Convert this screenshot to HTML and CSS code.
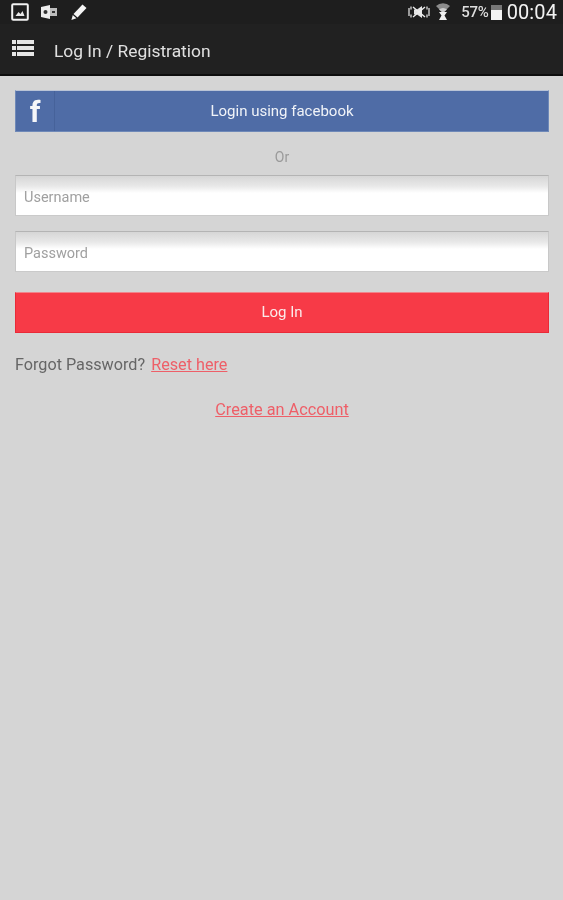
FILE: index.html
```html
<!DOCTYPE html>
<html lang="en">
<head>
<meta charset="utf-8">
<title>Log In / Registration</title>
<link rel="stylesheet" href="styles.css">
</head>
<body>
<header class="chrome">
  <div class="status">
    <div class="status-left">
      <svg class="ic" width="18" height="18" viewBox="0 0 18 18"><rect x="1.2" y="1.2" width="15.6" height="15.6" rx="1" fill="none" stroke="#f2f2f2" stroke-width="2"/><path d="M4.500 13l3-4 2 2 2-3 2 5z" fill="#e8e8e8"/></svg>
      <svg class="ic" width="17" height="14" viewBox="0 0 17 14"><rect x="6" y="3" width="10" height="8" fill="#bdbdbd"/><path d="M0 2l9-2v14l-9-2z" fill="#ececec"/><circle cx="4.500" cy="7" r="2" fill="#333"/><path d="M11 6h3v2h-3z" fill="#333"/></svg>
      <svg class="ic" width="18" height="18" viewBox="0 0 18 18"><path d="M12.500 1.500l4 3.500-9 9.500-4-3.500z" fill="#f5f5f5"/><path d="M2.800 12l3.600 3.200-5 1.800z" fill="#f5f5f5"/></svg>
    </div>
    <div class="status-right">
      <svg class="ic" width="24" height="14" viewBox="0 0 24 14"><path d="M7 4.500h3l5-3.500v12l-5-3.500H7z" fill="#e4e4e4"/><path d="M6 2l12 10M18 2L6 12" stroke="#eee" stroke-width="1.400"/><path d="M2 3v8M4 1.500v3M4 9.500v3M22 3v8M20 1.500v3M20 9.500v3" stroke="#ddd" stroke-width="1.300" fill="none"/></svg>
      <svg class="ic wifi" width="16" height="20" viewBox="0 0 16 20"><path d="M1 4a10 10 0 0 1 14 0L8 11z" fill="#8c8c8c"/><path d="M4 7.500a6 6 0 0 1 8 0L8 11z" fill="#cfcfcf"/><path d="M4 10h8l-2.500 3.500L12 18H4l2.500-4.500z" fill="#f0f0f0"/></svg>
      <span class="pct">57%</span>
      <span class="battery"><span class="battery-fill"></span></span>
      <span class="clock">00:04</span>
    </div>
  </div>
  <div class="appbar">
    <svg class="menu" width="23" height="18" viewBox="0 0 23 18"><g fill="#e6e6e6"><rect x="0" y="1" width="4" height="4"/><rect x="5" y="1" width="17" height="4"/><rect x="0" y="7" width="4" height="4"/><rect x="5" y="7" width="17" height="4"/><rect x="0" y="13" width="4" height="4"/><rect x="5" y="13" width="17" height="4"/></g></svg>
    <h1 class="title">Log In / Registration</h1>
  </div>
</header>
<main class="content">
  <a class="fb" href="#">
    <span class="fb-icon">f</span>
    <span class="fb-label">Login using facebook</span>
  </a>
  <p class="or">Or</p>
  <div class="field">Username</div>
  <div class="field">Password</div>
  <a class="login" href="#">Log In</a>
  <p class="forgot">Forgot Password? <a class="link reset" href="#">Reset here</a></p>
  <p class="create"><a class="link" href="#">Create an Account</a></p>
</main>
</body>
</html>
```

FILE: styles.css
```css
* { box-sizing: border-box; }
html, body { margin: 0; height: 100%; }
body {
  background: #d5d5d5;
  font-family: Roboto, "Liberation Sans", sans-serif;
  color: #666;
  overflow: hidden;
}
.chrome {
  height: 76px;
  background: #212121;
  border-bottom: 2px solid #0d0d0d;
  filter: blur(.45px);
}
.status {
  height: 24px;
  display: flex;
  justify-content: space-between;
  align-items: center;
  padding: 0 6px 0 11px;
  background: #1e1e1e;
}
.status-left { display: flex; align-items: center; gap: 12px; }
.status-right { display: flex; align-items: center; }
.ic { display: block; }
.wifi { margin-left: 4px; }
.pct {
  margin-left: 10px;
  font-size: 15px;
  font-weight: 500;
  color: #dedede;
  letter-spacing: -.2px;
}
.battery {
  width: 11px;
  height: 15px;
  margin-left: 2px;
  background: #777;
  display: flex;
  align-items: flex-end;
}
.battery-fill { width: 100%; height: 10px; background: #f4f4f4; }
.clock {
  margin-left: 5px;
  font-size: 20px;
  color: #f2f2f2;
  letter-spacing: .1px;
}
.appbar {
  height: 50px;
  display: flex;
  align-items: center;
  padding: 4px 0 0 12px;
}
.menu { display: block; margin-top: -6px; }
.title {
  margin: 0 0 0 19px;
  font-size: 17.400px;
  line-height: 20px;
  font-weight: 400;
  color: #e0e0e0;
}
.content {
  padding: 14px 14px 0 15px;
  filter: blur(.45px);
}
.fb {
  display: flex;
  height: 42px;
  background: #4f6ca6;
  border: 1px solid #6f89b8;
  border-top-color: #b9c3d6;
  color: #f0f3f8;
  text-decoration: none;
}
.fb-icon {
  width: 39px;
  border-right: 1px solid #46629a;
  display: flex;
  align-items: center;
  justify-content: center;
  font-family: Roboto, sans-serif;
  font-weight: 700;
  font-size: 30px;
  color: #f5f6f9;
}
.fb-label {
  flex: 1;
  display: flex;
  align-items: center;
  justify-content: center;
  font-size: 15px;
  padding-right: 39px;
}
.or {
  margin: 17px 0 9px;
  height: 17px;
  line-height: 17px;
  font-size: 14px;
  text-align: center;
  color: #9a9a9a;
}
.field {
  height: 41px;
  margin-bottom: 15px;
  padding: 3px 8px 0;
  display: flex;
  align-items: center;
  font-size: 14.500px;
  color: #a0a0a0;
  background: linear-gradient(#d6d6d6 0, #e8e8e8 10px, #fff 17px);
  border: 1px solid #c8c8c8;
  border-top-color: #b4b4b4;
  border-bottom-color: #cacaca;
}
.login {
  display: flex;
  align-items: center;
  justify-content: center;
  height: 41px;
  margin-top: 20px;
  padding-bottom: 2px;
  background: #f73a47;
  border: 1px solid #e92a38;
  border-top-color: #f0858c;
  color: #fbeaea;
  font-size: 15px;
  text-decoration: none;
}
.forgot {
  margin: 22px 0 0;
  line-height: 19px;
  font-size: 16.200px;
  color: #666;
}
.reset { margin-left: 2px; }
.link { color: #ee5f68; }
.create {
  margin: 26px 0 0;
  line-height: 19px;
  font-size: 16.300px;
  text-align: center;
}
```
